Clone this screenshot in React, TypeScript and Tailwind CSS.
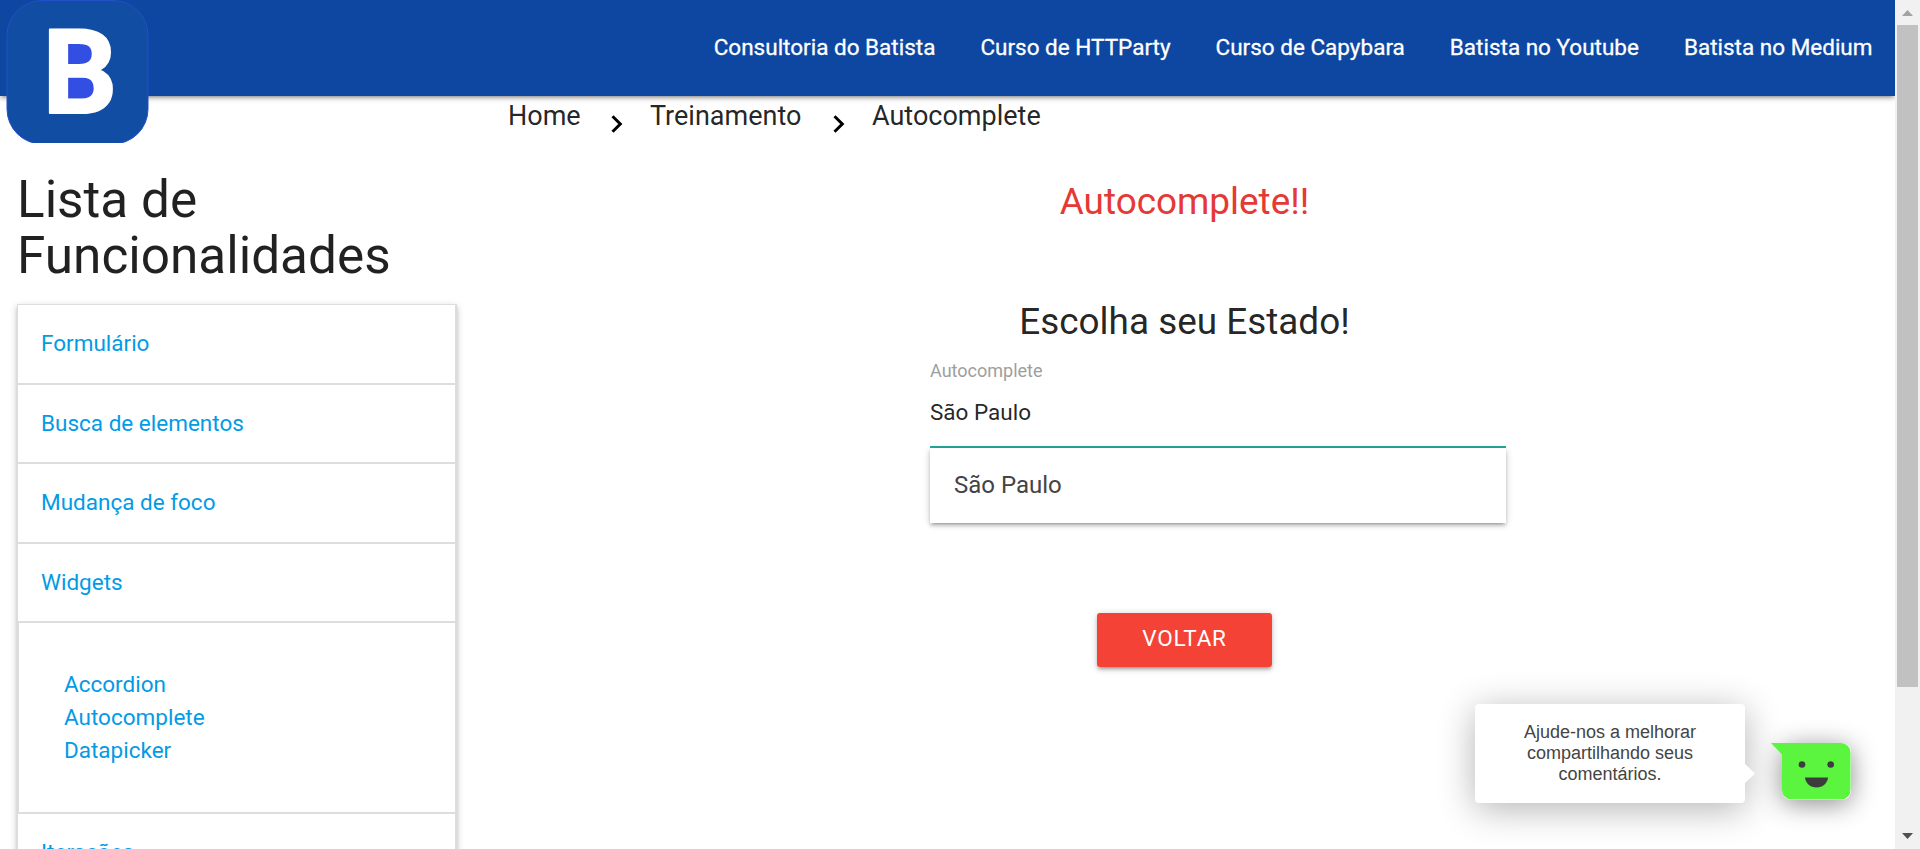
import React from "react";

const navLinks = [
  "Consultoria do Batista",
  "Curso de HTTParty",
  "Curso de Capybara",
  "Batista no Youtube",
  "Batista no Medium",
];

const features = [
  { label: "Formulário", size: "h-[80px]" },
  { label: "Busca de elementos", size: "h-[79px]" },
  { label: "Mudança de foco", size: "h-[80px]" },
  { label: "Widgets", size: "h-[79px]" },
];

const widgets = ["Accordion", "Autocomplete", "Datapicker"];

const depth1 =
  "shadow-[0_3px_3px_0_rgba(0,0,0,0.14),0_4.5px_1.5px_-3px_rgba(0,0,0,0.12),0_1.5px_7.5px_0_rgba(0,0,0,0.2)]";

function Logo() {
  return (
    <svg className="absolute left-[6px] top-0" width="143" height="143" viewBox="6 0 143 143">
      <rect x="7" y="0.5" width="141" height="143.5" rx="35" fill="#114da3" stroke="#2350c8" strokeWidth="1" />
      <rect x="60" y="42" width="32" height="22" fill="#334fe3" />
      <rect x="60" y="75" width="34" height="25" fill="#334fe3" />
      <text
        transform="translate(49.5 112.5) scale(1.01 1)"
        x="-7"
        y="0"
        fontFamily="Roboto, sans-serif"
        fontWeight="700"
        fontSize="116"
        fill="#fff"
        stroke="#fff"
        strokeWidth="2"
        strokeLinejoin="round"
      >
        B
      </text>
    </svg>
  );
}

function Header() {
  return (
    <header className={"relative z-10 h-[96px] w-full bg-[#0d47a1] " + depth1}>
      <Logo />
      <nav className="flex h-[94px] items-center justify-end">
        {navLinks.map((link) => (
          <a key={link} className="px-[22.5px] text-[22.5px] leading-none text-white [-webkit-text-stroke:0.3px_white]" href="#">
            {link}
          </a>
        ))}
      </nav>
    </header>
  );
}

function Sidebar() {
  return (
    <aside className="w-[474px] shrink-0 pl-[17px] pt-[76px]">
      <h4 className="h-[113px] w-[420px] text-[51.3px] leading-[56.4px]">Lista de Funcionalidades</h4>
      <div className={"mt-[19px] w-[440px] border-l border-r-2 border-t border-[#ddd] text-[22.5px] leading-[33.75px] text-[#039be5] " + depth1}>
        {features.map((f) => (
          <div key={f.label} className={"flex items-center border-b-2 border-[#ddd] pl-[23px] " + f.size}>
            <a href="#">{f.label}</a>
          </div>
        ))}
        <div className="h-[191px] border-b-2 border-l border-[#ddd] pl-[45px] pt-[45px] leading-[33px]">
          {widgets.map((w) => (
            <a key={w} href="#" className="block">{w}</a>
          ))}
        </div>
        <div className="flex h-[78px] items-center pl-[23px]">
          <a href="#">Iterações</a>
        </div>
      </div>
    </aside>
  );
}

function Chevron() {
  return (
    <svg className="mt-[19px] shrink-0" width="12" height="18" viewBox="0 0 12 18" fill="none">
      <path d="M1.5 1.2 9.3 9 1.5 16.8" stroke="#000" strokeWidth="3" />
    </svg>
  );
}

function Main() {
  return (
    <main className="flex min-w-0 flex-1 flex-col">
      <div className="flex h-[40px] items-start pl-[34px] text-[27px] leading-[41px]">
        <span className="w-[103px]">Home</span>
        <Chevron />
        <span className="ml-[27px] w-[183px]">Treinamento</span>
        <Chevron />
        <span className="ml-[27px]">Autocomplete</span>
      </div>
      <h5 className="mt-[46px] text-center text-[36.9px] leading-[40px] text-[#e53935]">Autocomplete!!</h5>
      <h5 className="mt-[80px] text-center text-[36.9px] leading-[40px]">Escolha seu Estado!</h5>
      <div className="ml-[456px] w-[576px]">
        <div className="mt-[17px] h-[24px] text-[18px] leading-[24px] text-[#9e9e9e]">Autocomplete</div>
        <div className="h-[65px] border-b-2 border-[#26a69a] pt-[14px] text-[22.5px] leading-[30px]">São Paulo</div>
        <div className={"flex h-[75px] items-center bg-white pl-[24px] text-[24px] leading-[33px] text-[#444] " + depth1}>São Paulo</div>
      </div>
      <button className={"ml-[623px] mt-[90px] flex h-[54px] w-[175px] items-center justify-center rounded-[3px] bg-[#f44336] pb-[2px] text-[22.5px] tracking-[0.75px] text-white " + depth1}>
        VOLTAR
      </button>
    </main>
  );
}

function Feedback() {
  return (
    <div className="absolute left-[1475px] top-[704px] z-20 flex">
      <div className="relative flex h-[99px] w-[270px] items-center justify-center rounded-[4px] bg-white px-[40px] text-center font-['Liberation_Sans',Arial,sans-serif] text-[18px] leading-[21px] text-[#444] shadow-[0_6px_36px_rgba(0,0,0,0.3)]">
        <span>
          Ajude-nos a melhorar
          <br />
          compartilhando seus
          <br />
          comentários.
        </span>
        <svg className="absolute left-[270px] top-[60px]" width="11" height="19" viewBox="0 0 11 19">
          <path d="M0 0 10 9.5 0 19Z" fill="#fff" />
        </svg>
      </div>
      <div className="relative ml-[37px] mt-[39px] h-[57px] w-[69px] rounded-[9px] shadow-[0_4px_26px_rgba(0,0,0,0.45)]">
        <svg className="absolute -left-[11px] top-0" width="80" height="57" viewBox="0 0 80 57">
          <path d="M0 0H70a9.5 9.5 0 0 1 9.5 9.5V47a9.5 9.5 0 0 1-9.5 9.5H20.500A9.500 9.500 0 0 1 11 47V11.500Z" fill="#5bf540" />
          <circle cx="31" cy="21.500" r="3.300" fill="#3c3c3c" />
          <circle cx="59.700" cy="21.500" r="3.300" fill="#3c3c3c" />
          <path d="M34 34.500H57C56.500 40.500 51.500 44.500 45.500 44.500S34.500 40.500 34 34.500Z" fill="#3c3c3c" />
        </svg>
      </div>
    </div>
  );
}

function Scrollbar() {
  return (
    <div className="flex h-full w-[25px] shrink-0 flex-col items-center bg-[#f1f1f1]">
      <div className="flex h-[25px] items-center justify-center">
        <svg width="11" height="6" viewBox="0 0 11 6"><path d="M5.500 0 11 6H0Z" fill="#a3a3a3" /></svg>
      </div>
      <div className="h-[662px] w-[21px] bg-[#c1c1c1]" />
      <svg className="mt-[146px]" width="11" height="6" viewBox="0 0 11 6"><path d="M0 0H11L5.500 6Z" fill="#505050" /></svg>
    </div>
  );
}

export default function App() {
  return (
    <div className="relative flex h-[849px] w-[1920px] overflow-hidden bg-white font-[Roboto,sans-serif] text-[rgba(0,0,0,0.87)]">
      <div className="h-full w-[1895px] overflow-hidden">
        <Header />
        <div className="flex">
          <Sidebar />
          <Main />
        </div>
      </div>
      <Scrollbar />
      <Feedback />
    </div>
  );
}
